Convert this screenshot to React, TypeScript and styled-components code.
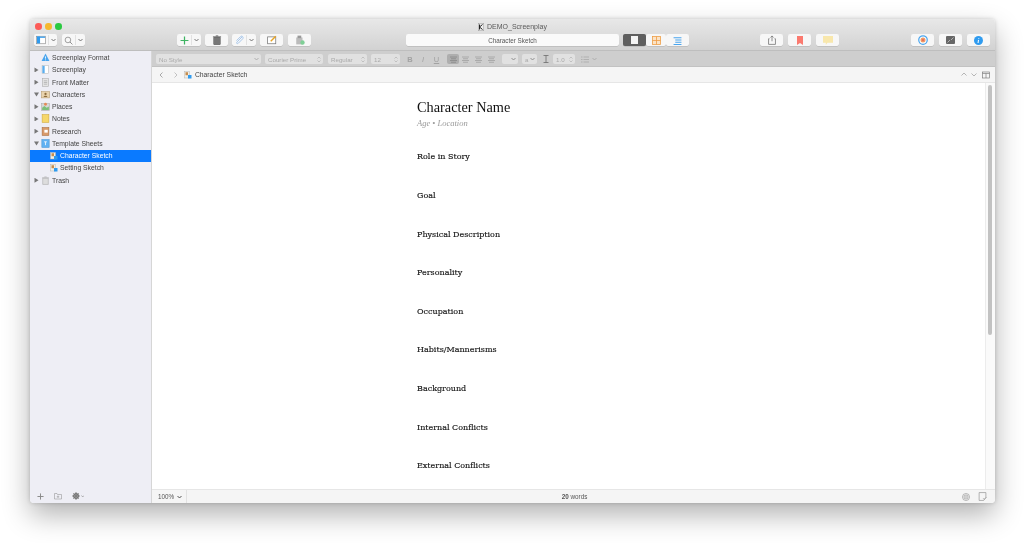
import React from "react";
import styled, { createGlobalStyle } from "styled-components";

const Global = createGlobalStyle`
  html, body { margin: 0; padding: 0; background: #fff; height: 100%; overflow: hidden; }
  body { font-family: "Liberation Sans", Arial, sans-serif; }
`;

const Page = styled.div`
  width: 1024px;
  height: 543px;
  padding: 19px 0 0 30px;
  box-sizing: border-box;
`;
const Window = styled.div`
  width: 965px;
  height: 484px;
  display: flex;
  flex-direction: column;
  border-radius: 4px;
  overflow: hidden;
  background: #fff;
  box-shadow: 0 12px 28px rgba(0, 0, 0, 0.3), 0 0 4px rgba(0, 0, 0, 0.18);
`;
const Chrome = styled.header`
  height: 32px;
  flex: none;
  background: linear-gradient(#e8e8e8, #d2d2d2);
  border-bottom: 1px solid #bebebe;
  box-sizing: border-box;
  display: flex;
  flex-direction: column;
  filter: blur(0.35px);
`;
const TitleRow = styled.div`
  height: 15px;
  flex: none;
  position: relative;
  display: flex;
  align-items: center;
  justify-content: center;
  gap: 3px;
  font-size: 7px;
  color: #5a5a5a;
`;
const Lights = styled.div`
  position: absolute;
  left: 5px;
  top: 4px;
  display: flex;
  gap: 3.6px;
`;
const Light = styled.span<{ $c: string }>`
  width: 6.6px;
  height: 6.6px;
  border-radius: 50%;
  background: ${(p) => p.$c};
`;
const Toolbar = styled.div`
  display: flex;
  align-items: flex-start;
  height: 12px;
`;
const Btn = styled.div<{ $w: number; $ml?: number; $dark?: boolean }>`
  width: ${(p) => p.$w}px;
  height: 12px;
  margin-left: ${(p) => p.$ml ?? 0}px;
  flex: none;
  display: flex;
  align-items: center;
  justify-content: center;
  gap: 2px;
  box-sizing: border-box;
  background: ${(p) => (p.$dark ? "#5f5f5f" : "#f7f7f7")};
  border-radius: 2px;
  box-shadow: 0 0.5px 0.5px rgba(0, 0, 0, 0.18);
`;
const Caret = styled.span`
  display: flex;
  align-items: center;
  height: 10px;
  padding-left: 2px;
  border-left: 1px solid #e2e2e2;
`;
const Field = styled.div`
  width: 213px;
  height: 12px;
  margin-left: 95px;
  flex: none;
  background: #fafafa;
  border-radius: 2px;
  box-shadow: 0 0.5px 0.5px rgba(0, 0, 0, 0.18);
  display: flex;
  align-items: center;
  justify-content: center;
  font-size: 6.3px;
  color: #555;
`;
const Body = styled.div`
  flex: 1;
  display: flex;
  min-height: 0;
`;
const Sidebar = styled.aside`
  width: 122px;
  flex: none;
  background: #eeeef5;
  border-right: 1px solid #d6d6d6;
  box-sizing: border-box;
  display: flex;
  flex-direction: column;
  padding-top: 0.5px;
  filter: blur(0.3px);
`;
const Tree = styled.div`
  flex: 1;
`;
const Row = styled.div<{ $indent: number; $sel?: boolean }>`
  height: 12.25px;
  display: flex;
  align-items: center;
  gap: 2px;
  padding-left: ${(p) => p.$indent}px;
  font-size: 6.8px;
  white-space: nowrap;
  color: ${(p) => (p.$sel ? "#fff" : "#444")};
  font-weight: ${(p) => (p.$sel ? 500 : 400)};
  background: ${(p) => (p.$sel ? "#0a7aff" : "transparent")};
`;
const Disclosure = styled.span<{ $open?: boolean; $none?: boolean }>`
  width: 5px;
  flex: none;
  height: 5px;
  visibility: ${(p) => (p.$none ? "hidden" : "visible")};
  background: #777;
  clip-path: ${(p) =>
    p.$open ? "polygon(0 10%, 100% 10%, 50% 90%)" : "polygon(10% 0, 90% 50%, 10% 100%)"};
`;
const SideFoot = styled.div`
  height: 14px;
  flex: none;
  display: flex;
  align-items: center;
  padding-left: 7px;
  gap: 10px;
`;
const Main = styled.main`
  flex: 1;
  min-width: 0;
  display: flex;
  flex-direction: column;
`;
const FormatBar = styled.div`
  height: 16px;
  flex: none;
  background: #cecece;
  border-bottom: 1px solid #c2c2c2;
  box-sizing: border-box;
  padding: 3px 0 0 4px;
  display: flex;
  align-items: flex-start;
  filter: blur(0.35px);
`;
const Select = styled.div<{ $w: number; $ml?: number }>`
  width: ${(p) => p.$w}px;
  margin-left: ${(p) => p.$ml ?? 0}px;
  height: 10px;
  flex: none;
  box-sizing: border-box;
  padding: 0 2px 0 3px;
  background: #e1e1e1;
  border-radius: 2px;
  display: flex;
  align-items: center;
  justify-content: space-between;
  font-size: 6.2px;
  color: #aaa;
  white-space: nowrap;
`;
const FmtIcon = styled.div<{ $w: number; $ml?: number; $on?: boolean }>`
  width: ${(p) => p.$w}px;
  margin-left: ${(p) => p.$ml ?? 0}px;
  height: 10px;
  flex: none;
  border-radius: 2px;
  display: flex;
  align-items: center;
  justify-content: center;
  font-size: 7.5px;
  font-family: "Liberation Sans", sans-serif;
  color: #a2a2a2;
  background: ${(p) => (p.$on ? "#aeaeae" : "transparent")};
`;
const NavBar = styled.nav`
  height: 16px;
  flex: none;
  background: #f5f5f5;
  border-bottom: 1px solid #e6e6e6;
  box-sizing: border-box;
  display: flex;
  align-items: center;
  padding: 0 5px 0 7px;
  font-size: 6.8px;
  color: #444;
  filter: blur(0.3px);
`;
const NavSpacer = styled.div`
  flex: 1;
`;
const Editor = styled.section`
  flex: 1;
  min-height: 0;
  display: flex;
  overflow: hidden;
`;
const Doc = styled.article`
  flex: 1;
  padding: 16px 0 0 265px;
  filter: blur(0.25px);
`;
const Heading = styled.h1`
  margin: 0;
  font: 400 14.3px/16px "Liberation Serif", serif;
  color: #111;
`;
const Sub = styled.div`
  font: italic 8.5px/14px "Liberation Serif", serif;
  color: #9a9a9a;
  padding-top: 1px;
  margin-bottom: 17.4px;
`;
const Section = styled.div`
  height: 38.6px;
  line-height: 20px;
  font-family: "DejaVu Serif", serif;
  font-size: 8px;
  -webkit-text-stroke: 0.15px #222;
  color: #111;
`;
const Track = styled.div`
  width: 10px;
  flex: none;
  background: #fafafa;
  border-left: 1px solid #ececec;
  box-sizing: border-box;
  padding: 2px 0 0 2px;
`;
const Thumb = styled.div`
  width: 4px;
  height: 250px;
  border-radius: 2px;
  background: #c2c2c2;
`;
const Footer = styled.footer`
  height: 14px;
  flex: none;
  background: #f5f5f5;
  border-top: 1px solid #e6e6e6;
  box-sizing: border-box;
  display: flex;
  align-items: center;
  font-size: 6.3px;
  color: #555;
  filter: blur(0.25px);
`;
const Zoom = styled.div`
  width: 35px;
  height: 100%;
  box-sizing: border-box;
  padding: 0 4px 0 6px;
  display: flex;
  justify-content: space-between;
  align-items: center;
  border-right: 1px solid #e2e2e2;
`;
const Count = styled.div`
  flex: 1;
  text-align: center;
  b { font-weight: 700; }
`;
const FootIcons = styled.div`
  display: flex;
  align-items: center;
  gap: 8px;
  padding-right: 8px;
`;

type S = { w?: number; c?: string };
const Svg = ({ s, children }: { s: number; children: React.ReactNode }) => (
  <svg width={s} height={s} viewBox="0 0 16 16" fill="none" style={{ flex: "none" }}>{children}</svg>
);
const Chev = ({ c = "#666" }: S) => (
  <svg width="5" height="4" viewBox="0 0 10 8" fill="none"><path d="M1 2l4 4 4-4" stroke={c} strokeWidth="1.8" /></svg>
);
const Updown = ({ c = "#aaa" }: S) => (
  <svg width="4" height="7" viewBox="0 0 8 14" fill="none"><path d="M1 5l3-3 3 3M1 9l3 3 3-3" stroke={c} strokeWidth="1.2" /></svg>
);
const SidebarIcon = () => (
  <Svg s={10}><rect x="1" y="2" width="14" height="12" fill="#fff" stroke="#8a8a8a" /><rect x="1.5" y="2.5" width="5" height="11" fill="#2f9bef" /><rect x="1.5" y="2.5" width="13" height="2" fill="#2f9bef" /></Svg>
);
const Search = () => (
  <Svg s={9}><circle cx="7" cy="7" r="5" stroke="#777" strokeWidth="1.2" /><path d="M10.5 10.5L15 15" stroke="#777" strokeWidth="1.4" /></Svg>
);
const Plus = ({ c = "#3fb463", s = 9 }: S & { s?: number }) => (
  <Svg s={s}><path d="M8 1v14M1 8h14" stroke={c} strokeWidth="2.2" /></Svg>
);
const Trash = () => (
  <Svg s={10}><path d="M3 4h10v11H3zM1.5 3h13M6 1.5h4" stroke="#666" strokeWidth="1.6" /><path d="M3 4h10v11H3z" fill="#777" /></Svg>
);
const Clip = () => (
  <Svg s={10}><path d="M13 3L5 11c-2 2 0 4 2 2l7-7c2-3-2-6-4-3L4 9" stroke="#a9c8ec" strokeWidth="1.6" /></Svg>
);
const Compose = () => (
  <Svg s={10}><rect x="1" y="3" width="13" height="11" fill="#fff" stroke="#777" strokeWidth="1.2" /><path d="M6 10l8-8" stroke="#e8a321" strokeWidth="2.2" /></Svg>
);
const Snap = () => (
  <Svg s={10}><rect x="2" y="4" width="10" height="11" fill="#bbb" /><rect x="4" y="1" width="6" height="4" fill="#999" /><circle cx="12" cy="12" r="3.5" fill="#7fcf96" /></Svg>
);
const DocIcon = () => (
  <svg width="6" height="8" viewBox="0 0 12 16"><rect x=".5" y=".5" width="11" height="15" fill="#eee" stroke="#999" /><path d="M3 3v10M3 8l6-5M3 8l6 5" stroke="#222" strokeWidth="2" /></svg>
);
const SegDoc = () => (
  <svg width="7" height="8" viewBox="0 0 14 16"><rect width="14" height="16" fill="#f4f4f4" /></svg>
);
const SegGrid = () => (
  <Svg s={9}><rect x="1" y="1" width="14" height="14" fill="#fbe3c6" stroke="#ee9c44" strokeWidth="1.4" /><path d="M8 1v14M1 8h14" stroke="#ee9c44" strokeWidth="1.4" /></Svg>
);
const SegOutline = () => (
  <Svg s={9}><path d="M1 3h14M4 7h11M4 11h11M1 15h14" stroke="#4aa5ee" strokeWidth="2" /></Svg>
);
const Share = () => (
  <Svg s={10}><path d="M4 6H2.5v9h11V6H12" stroke="#777" strokeWidth="1.3" /><path d="M8 10V1.5M5.5 4L8 1.5 10.5 4" stroke="#777" strokeWidth="1.3" /></Svg>
);
const Bookmark = () => (
  <svg width="6" height="9" viewBox="0 0 12 18"><path d="M0 0h12v18l-6-4-6 4z" fill="#fb7a6f" /></svg>
);
const Note = () => (
  <svg width="10" height="9" viewBox="0 0 18 16"><path d="M0 0h18v12H8l-3 4v-4H0z" fill="#f8e7ac" /></svg>
);
const Target = () => (
  <Svg s={10}><circle cx="8" cy="8" r="6.8" fill="#fff" stroke="#4aa5ee" strokeWidth="2" /><circle cx="8" cy="8" r="4" fill="#ee9c68" /><circle cx="8" cy="8" r="1.8" fill="#e86a5a" /></Svg>
);
const Inspector = () => (
  <svg width="9" height="8" viewBox="0 0 18 16"><rect width="18" height="16" rx="2" fill="#666" /><path d="M3 13l5-5M15 3l-5 5" stroke="#bbb" strokeWidth="1.8" /></svg>
);
const Info = () => (
  <Svg s={9}><circle cx="8" cy="8" r="8" fill="#2f9bef" /><path d="M8.5 3.5v1.5M8 7l-.8 5.5" stroke="#fff" strokeWidth="1.8" /></Svg>
);
const Align = ({ c = "#a6a6a6" }: S) => (
  <svg width="7" height="7" viewBox="0 0 14 14"><path d="M0 2h14M2 5.5h10M0 9h14M2 12.5h10" stroke={c} strokeWidth="1.8" /></svg>
);
const Beam = () => (
  <svg width="6" height="8" viewBox="0 0 12 16" fill="none"><path d="M1 1h10M1 15h10M6 1v14" stroke="#666" strokeWidth="1.5" /></svg>
);
const ListIcon = () => (
  <svg width="8" height="7" viewBox="0 0 16 14"><path d="M0 2h3M5 2h11M0 7h3M5 7h11M0 12h3M5 12h11" stroke="#aaa" strokeWidth="1.6" /></svg>
);
const Arrow = ({ dir, c = "#888" }: { dir: "l" | "r" | "u" | "d"; c?: string }) => {
  const d = { l: "M7 1L2 6l5 5", r: "M3 1l5 5-5 5", u: "M1 7l5-5 5 5", d: "M1 3l5 5 5-5" }[dir];
  return <svg width="6" height="6" viewBox="0 0 12 12" fill="none"><path d={d} stroke={c} strokeWidth="1.4" /></svg>;
};
const Panel = () => (
  <Svg s={8}><rect x="1" y="2" width="14" height="12" stroke="#777" strokeWidth="1.3" /><path d="M1 5h14M8 5v9" stroke="#777" strokeWidth="1.3" /></Svg>
);
const Sheet = () => (
  <Svg s={8}><rect x="1" y="1" width="10" height="13" fill="#f2efe6" stroke="#b7b7b7" /><rect x="3" y="2.5" width="5" height="6" fill="#c58c4e" /><rect x="8" y="8" width="7" height="7" fill="#2f9bef" /></Svg>
);

const Tile = ({ kind }: { kind: string }) => {
  switch (kind) {
    case "format":
      return <Svg s={9}><path d="M8 1l7 13H1z" fill="#4aa5ee" /><path d="M8 6v4M8 11.5v1.5" stroke="#fff" strokeWidth="1.5" /></Svg>;
    case "script":
      return <Svg s={9}><rect x="2" y="1" width="11" height="14" fill="#fff" stroke="#bbb" /><rect x="2.5" y="1.5" width="4" height="13" fill="#59aef0" /></Svg>;
    case "front":
      return <Svg s={9}><rect x="2.5" y="1" width="11" height="14" fill="#e5e5e5" stroke="#aaa" /><path d="M5 5h6M5 8h6M5 11h6" stroke="#999" /></Svg>;
    case "chars":
      return <Svg s={9}><rect x="1" y="3" width="14" height="11" fill="#e9d3ad" stroke="#b69a6b" /><circle cx="8" cy="7" r="2" fill="#8a6a3c" /><path d="M4.5 12.5c1-3 6-3 7 0z" fill="#8a6a3c" /></Svg>;
    case "places":
      return <Svg s={9}><rect x="1" y="3" width="14" height="12" fill="#d7d7d7" stroke="#aaa" /><path d="M2 10l4-3 4 3 4-2v6H2z" fill="#7bbf7a" /><circle cx="8" cy="4" r="2.5" fill="#e58a55" /></Svg>;
    case "notes":
      return <Svg s={9}><rect x="2" y="1" width="12" height="14" fill="#f6d76a" stroke="#cfa93c" /></Svg>;
    case "research":
      return <Svg s={9}><rect x="2" y="1" width="12" height="14" fill="#d89a6a" stroke="#a96b3c" /><rect x="6" y="5" width="6" height="5" fill="#fff" /></Svg>;
    case "template":
      return <Svg s={9}><rect x="1.5" y="1" width="13" height="14" fill="#62b2f2" stroke="#4a97d6" /><path d="M5.5 5h5M8 5v6" stroke="#fff" strokeWidth="1.4" /></Svg>;
    case "trash":
      return <Svg s={9}><path d="M3 4h10v11H3z" fill="#ddd" stroke="#aaa" /><path d="M2 3h12M6 1.5h4" stroke="#aaa" /></Svg>;
    default:
      return <Sheet />;
  }
};

const rows = [
  { label: "Screenplay Format", kind: "format", indent: 4, none: true },
  { label: "Screenplay", kind: "script", indent: 4 },
  { label: "Front Matter", kind: "front", indent: 4 },
  { label: "Characters", kind: "chars", indent: 4, open: true },
  { label: "Places", kind: "places", indent: 4 },
  { label: "Notes", kind: "notes", indent: 4 },
  { label: "Research", kind: "research", indent: 4 },
  { label: "Template Sheets", kind: "template", indent: 4, open: true },
  { label: "Character Sketch", kind: "sheet", indent: 20, leaf: true, sel: true },
  { label: "Setting Sketch", kind: "sheet", indent: 20, leaf: true },
  { label: "Trash", kind: "trash", indent: 4 },
];
const sections = [
  "Role in Story", "Goal", "Physical Description", "Personality", "Occupation",
  "Habits/Mannerisms", "Background", "Internal Conflicts", "External Conflicts",
];

export default function App() {
  return (
    <Page>
      <Global />
      <Window>
        <Chrome>
          <TitleRow>
            <Lights>
              <Light $c="#fc5b57" />
              <Light $c="#f5b82e" />
              <Light $c="#2ac940" />
            </Lights>
            <DocIcon />
            DEMO_Screenplay
          </TitleRow>
          <Toolbar>
            <Btn $w={23} $ml={4}><SidebarIcon /><Caret><Chev /></Caret></Btn>
            <Btn $w={23} $ml={5}><Search /><Caret><Chev /></Caret></Btn>
            <Btn $w={24} $ml={92}><Plus /><Caret><Chev /></Caret></Btn>
            <Btn $w={23} $ml={4}><Trash /></Btn>
            <Btn $w={24} $ml={4}><Clip /><Caret><Chev /></Caret></Btn>
            <Btn $w={23} $ml={4}><Compose /></Btn>
            <Btn $w={23} $ml={5}><Snap /></Btn>
            <Field>Character Sketch</Field>
            <Btn $w={23} $ml={4} $dark><SegDoc /></Btn>
            <Btn $w={20}><SegGrid /></Btn>
            <Btn $w={23}><SegOutline /></Btn>
            <Btn $w={23} $ml={71}><Share /></Btn>
            <Btn $w={23} $ml={5}><Bookmark /></Btn>
            <Btn $w={23} $ml={5}><Note /></Btn>
            <Btn $w={23} $ml={72}><Target /></Btn>
            <Btn $w={23} $ml={5}><Inspector /></Btn>
            <Btn $w={23} $ml={5}><Info /></Btn>
          </Toolbar>
        </Chrome>
        <Body>
          <Sidebar>
            <Tree>
              {rows.map((r) => (
                <Row key={r.label} $indent={r.indent} $sel={r.sel}>
                  {!r.leaf && <Disclosure $open={r.open} $none={r.none} />}
                  <Tile kind={r.kind} />
                  {r.label}
                </Row>
              ))}
            </Tree>
            <SideFoot>
              <Plus c="#888" s={7} />
              <Svg s={8}><path d="M1 3h5l1 2h8v9H1z" stroke="#888" /><path d="M8 7v5M5.5 9.5h5" stroke="#888" /></Svg>
              <svg width="12" height="8" viewBox="0 0 24 16" fill="none"><circle cx="8" cy="8" r="4.5" stroke="#777" strokeWidth="3" /><path d="M8 0v16M0 8h16M2.5 2.5l11 11M13.5 2.5l-11 11" stroke="#777" strokeWidth="1.6" /><path d="M19 7l2.5 3L24 7" stroke="#888" strokeWidth="1.2" /></svg>
            </SideFoot>
          </Sidebar>
          <Main>
            <FormatBar>
              <Select $w={105}>No Style<Chev c="#aaa" /></Select>
              <Select $w={58} $ml={4}>Courier Prime<Updown /></Select>
              <Select $w={39} $ml={5}>Regular<Updown /></Select>
              <Select $w={29} $ml={4}>12<Updown /></Select>
              <FmtIcon $w={12} $ml={4}><b>B</b></FmtIcon>
              <FmtIcon $w={14}><i>I</i></FmtIcon>
              <FmtIcon $w={13}><u>U</u></FmtIcon>
              <FmtIcon $w={12} $ml={4} $on><Align c="#8c8c8c" /></FmtIcon>
              <FmtIcon $w={13}><Align /></FmtIcon>
              <FmtIcon $w={13}><Align /></FmtIcon>
              <FmtIcon $w={13}><Align /></FmtIcon>
              <Select $w={16} $ml={4}><span /><Chev c="#888" /></Select>
              <Select $w={15} $ml={4}><span>a</span><Chev c="#888" /></Select>
              <FmtIcon $w={12} $ml={3}><Beam /></FmtIcon>
              <Select $w={22} $ml={1}>1.0<Updown /></Select>
              <FmtIcon $w={10} $ml={5}><ListIcon /></FmtIcon>
              <FmtIcon $w={8}><Chev c="#aaa" /></FmtIcon>
            </FormatBar>
            <NavBar>
              <Arrow dir="l" />
              <FmtIcon $w={6} $ml={8}><Arrow dir="r" c="#aaa" /></FmtIcon>
              <FmtIcon $w={10} $ml={4}><Sheet /></FmtIcon>
              &nbsp;Character Sketch
              <NavSpacer />
              <Arrow dir="u" c="#999" />
              <FmtIcon $w={6} $ml={4}><Arrow dir="d" c="#999" /></FmtIcon>
              <FmtIcon $w={8} $ml={5}><Panel /></FmtIcon>
            </NavBar>
            <Editor>
              <Doc>
                <Heading>Character Name</Heading>
                <Sub>Age • Location</Sub>
                {sections.map((s) => (
                  <Section key={s}>{s}</Section>
                ))}
              </Doc>
              <Track><Thumb /></Track>
            </Editor>
            <Footer>
              <Zoom>100%<Chev c="#444" /></Zoom>
              <Count><b>20</b> words</Count>
              <FootIcons>
                <Svg s={8}><circle cx="8" cy="8" r="7" stroke="#999" strokeWidth="1.4" /><circle cx="8" cy="8" r="4" stroke="#999" strokeWidth="1.4" /><circle cx="8" cy="8" r="1.5" fill="#999" /></Svg>
                <Svg s={9}><path d="M2 1h12v9l-4 5H2z" stroke="#888" strokeWidth="1.1" /><path d="M9 11l2 2 4-4" stroke="#888" /></Svg>
              </FootIcons>
            </Footer>
          </Main>
        </Body>
      </Window>
    </Page>
  );
}
